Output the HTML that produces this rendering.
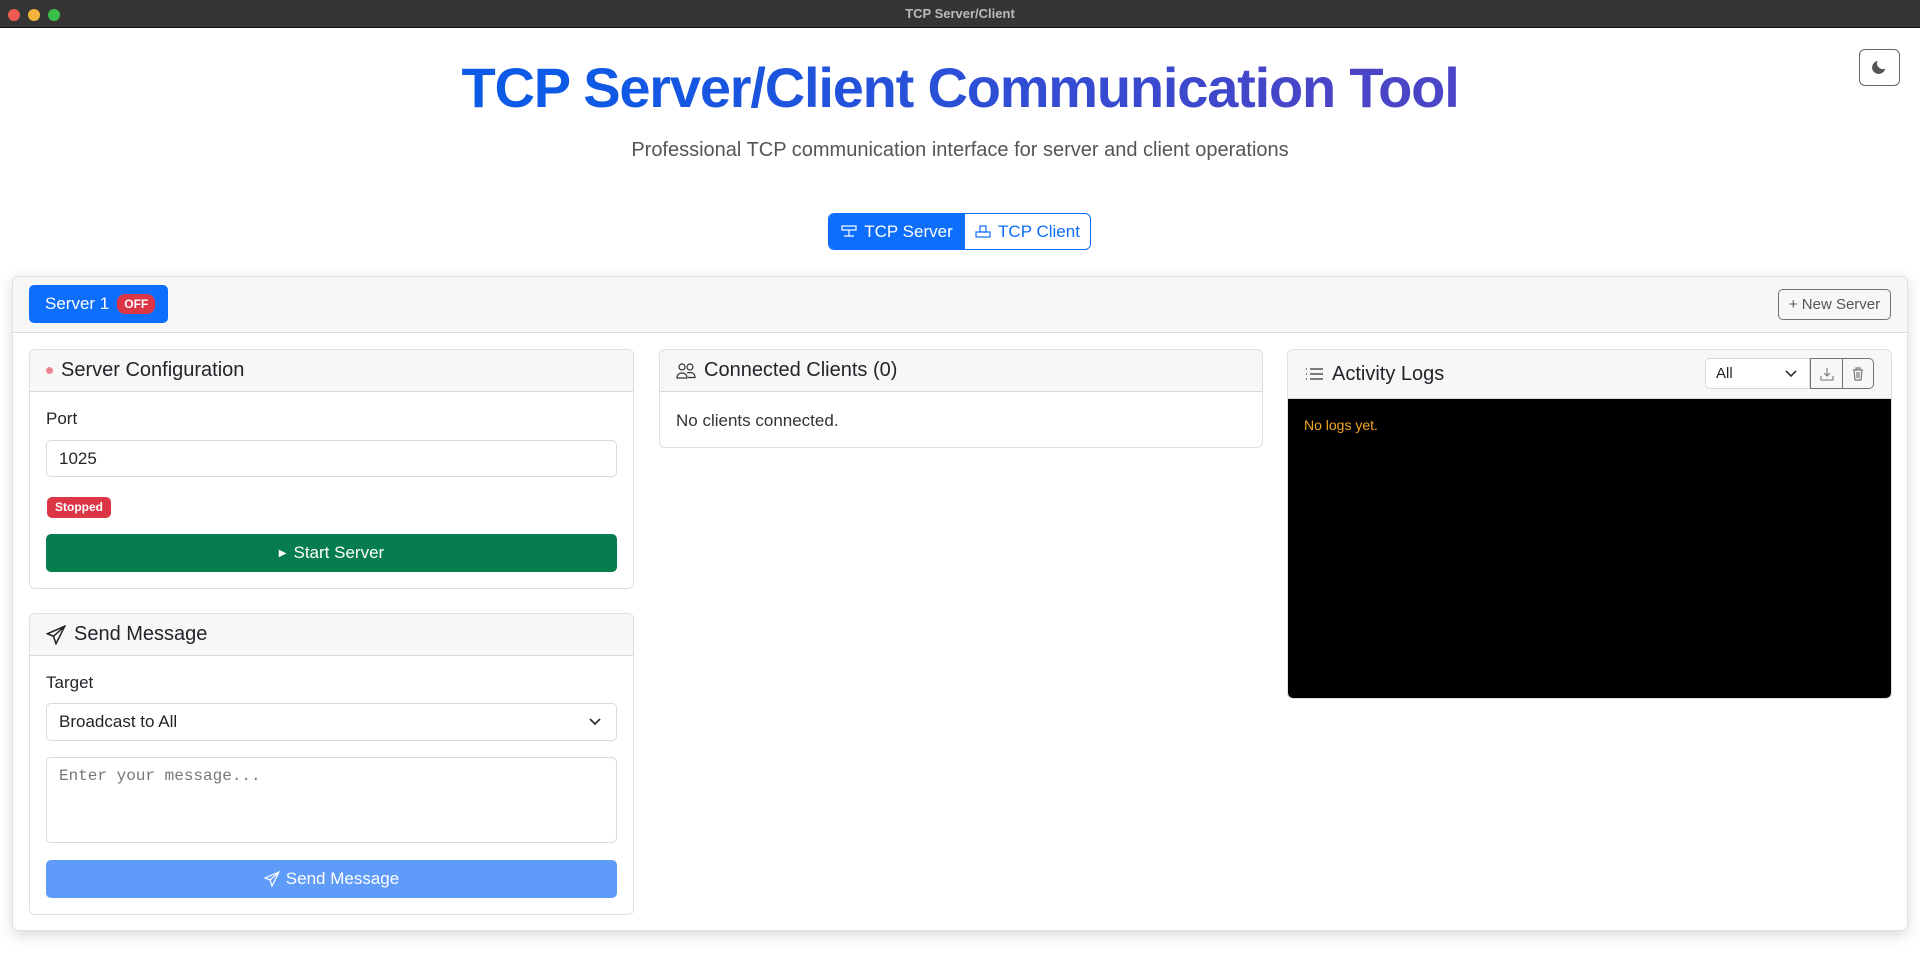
<!DOCTYPE html>
<html><head><meta charset="utf-8"><style>
*{box-sizing:border-box;margin:0;padding:0}
body{width:1920px;height:966px;overflow:hidden;background:#fff;font-family:"Liberation Sans",sans-serif;color:#212529;position:relative}
.abs{position:absolute}
.tb{left:0;top:0;width:1920px;height:28px;background:#353535;border-bottom:1px solid #111;color:#bbb;font-size:13px;font-weight:bold;text-align:center;line-height:28px}
.dot{position:absolute;top:9px;width:12px;height:12px;border-radius:50%}
h1{position:absolute;left:0;width:1920px;top:55px;text-align:center;font-size:56px;font-weight:bold;letter-spacing:-1.2px;color:#1a56db;background:linear-gradient(90deg,#0d5ae6 30%,#4a44c6 70%);-webkit-background-clip:text;background-clip:text;-webkit-text-fill-color:transparent}
.sub{left:0;width:1920px;top:139px;text-align:center;font-size:20px;color:#555}
.card{border:1px solid #dcdfe3;border-radius:6px;background:#fff}
.ch{background:#f7f7f7;border-bottom:1px solid #d6d8db;border-radius:6px 6px 0 0;font-size:20px;display:flex;align-items:center;padding-left:16px;gap:8px}
.inp{border:1px solid #d6dadf;border-radius:5px;background:#fff;font-size:17px;padding-left:12px;display:flex;align-items:center}
.lbl{font-size:17px}
</style></head><body>
<div class="abs tb">TCP Server/Client<span class="dot" style="left:8px;background:#ee5b53"></span><span class="dot" style="left:28px;background:#f4b43c"></span><span class="dot" style="left:48px;background:#3ac04a"></span></div>
<div class="abs" style="left:1859px;top:49px;width:41px;height:37px;border:1px solid #666;border-radius:6px;display:flex;align-items:center;justify-content:center"><svg width="15" height="15" viewBox="0 0 16 16"><path d="M6 1a7 7 0 1 0 8 8A6 6 0 0 1 6 1z" fill="#555"/></svg></div>
<h1>TCP Server/Client Communication Tool</h1>
<div class="abs sub">Professional TCP communication interface for server and client operations</div>
<div class="abs" style="left:828px;top:213px;width:263px;height:37px;border:1px solid #0d6efd;border-radius:6px;display:flex;overflow:hidden;font-size:17px">
<div style="width:136px;background:#0d6efd;color:#fff;display:flex;align-items:center;justify-content:center;gap:7px"><svg width="16" height="14" viewBox="0 0 16 14" fill="none" stroke="#fff" stroke-width="1.2"><rect x="1" y="1" width="14" height="4"/><path d="M8 5v6M3 11h10"/></svg>TCP Server</div>
<div style="flex:1;color:#0d6efd;display:flex;align-items:center;justify-content:center;gap:7px"><svg width="16" height="14" viewBox="0 0 16 14" fill="none" stroke="#0d6efd" stroke-width="1.2"><rect x="1" y="7" width="14" height="5"/><rect x="5" y="1" width="6" height="6"/></svg>TCP Client</div></div>
<div class="abs card" style="left:12px;top:276px;width:1896px;height:655px;box-shadow:0 4px 14px rgba(0,0,0,.15)">
<div style="height:56px;background:#f7f7f7;border-bottom:1px solid #d6d8db;border-radius:6px 6px 0 0"></div></div>
<div class="abs" style="left:29px;top:285px;width:139px;height:38px;background:#0d6efd;border-radius:5px;color:#fff;font-size:17px;display:flex;align-items:center;padding-left:16px;gap:8px">Server 1<span style="background:#dc3545;border-radius:8px;font-size:12px;font-weight:bold;padding:3px 7px">OFF</span></div>
<div class="abs" style="left:1778px;top:289px;width:113px;height:31px;border:1px solid #6c757d;border-radius:5px;color:#555;font-size:15px;display:flex;align-items:center;justify-content:center">+ New Server</div>

<div class="abs card" style="left:29px;top:349px;width:605px;height:240px">
<div class="ch" style="height:42px"><span style="width:7px;height:7px;border-radius:50%;background:#ea868f"></span>Server Configuration</div></div>
<div class="abs lbl" style="left:46px;top:409px">Port</div>
<div class="abs inp" style="left:46px;top:440px;width:571px;height:37px">1025</div>
<div class="abs" style="left:47px;top:497px;width:64px;height:21px;background:#dc3545;border-radius:5px;color:#fff;font-size:12px;font-weight:bold;text-align:center;line-height:21px">Stopped</div>
<div class="abs" style="left:46px;top:534px;width:571px;height:38px;background:#067d4e;border-radius:5px;color:#fff;font-size:17px;display:flex;align-items:center;justify-content:center;gap:7px"><span style="font-size:10px">&#9654;</span>Start Server</div>

<div class="abs card" style="left:29px;top:613px;width:605px;height:302px">
<div class="ch" style="height:42px"><svg width="20" height="20" viewBox="0 0 16 16" fill="none" stroke="#222" stroke-width="1.2"><path d="M15 1L1 7l5 2 2 6z M15 1L6 9"/></svg>Send Message</div></div>
<div class="abs lbl" style="left:46px;top:673px">Target</div>
<div class="abs inp" style="left:46px;top:703px;width:571px;height:38px">Broadcast to All<svg style="position:absolute;right:14px" width="14" height="10" viewBox="0 0 14 10" fill="none" stroke="#333" stroke-width="1.8"><path d="M2 2l5 5 5-5"/></svg></div>
<div class="abs inp" style="left:46px;top:757px;width:571px;height:86px;align-items:flex-start;padding-top:9px;font-family:'Liberation Mono',monospace;font-size:16px;color:#777">Enter your message...</div>
<div class="abs" style="left:46px;top:860px;width:571px;height:38px;background:#5f9cfa;border-radius:5px;color:#fff;font-size:17px;display:flex;align-items:center;justify-content:center;gap:6px"><svg width="16" height="16" viewBox="0 0 16 16" fill="none" stroke="#fff" stroke-width="1.2"><path d="M15 1L1 7l5 2 2 6z M15 1L6 9"/></svg>Send Message</div>

<div class="abs card" style="left:659px;top:349px;width:604px;height:99px">
<div class="ch" style="height:42px"><svg width="20" height="18" viewBox="0 0 20 18" fill="none" stroke="#333" stroke-width="1.2"><circle cx="6" cy="5" r="3"/><circle cx="14" cy="5" r="3"/><path d="M1 16c0-4 3-5 5-5s5 1 5 5zM11 11c1-.5 2-.5 3-.5 2 0 5 1 5 5h-7"/></svg>Connected Clients (0)</div>
<div style="padding:19px 16px;font-size:17px;color:#333">No clients connected.</div></div>

<div class="abs card" style="left:1287px;top:349px;width:605px;height:350px;overflow:hidden">
<div class="ch" style="height:49px"><svg width="20" height="16" viewBox="0 0 20 16" fill="none" stroke="#333" stroke-width="1.3"><path d="M6 3h13M6 8h13M6 13h13M2 3h1M2 8h1M2 13h1"/></svg>Activity Logs</div>
<div style="background:#000;height:300px;border-radius:0 0 6px 6px;padding:18px 16px;color:#f5a623;font-size:14px">No logs yet.</div></div>
<div class="abs inp" style="left:1705px;top:358px;width:105px;height:31px;font-size:15px;padding-left:10px;border-radius:5px 0 0 5px">All<svg style="position:absolute;right:12px" width="12" height="8" viewBox="0 0 12 8" fill="none" stroke="#333" stroke-width="1.6"><path d="M1 1l5 5 5-5"/></svg></div>
<div class="abs" style="left:1810px;top:358px;width:64px;height:31px;border:1px solid #6c757d;border-radius:0 5px 5px 0;display:flex"><div style="width:32px;border-right:1px solid #6c757d;display:flex;align-items:center;justify-content:center"><svg width="14" height="14" viewBox="0 0 14 14" fill="none" stroke="#777" stroke-width="1.1"><path d="M7 1v8M4 6l3 3 3-3M1 9v4h12V9"/></svg></div><div style="flex:1;display:flex;align-items:center;justify-content:center"><svg width="12" height="14" viewBox="0 0 12 14" fill="none" stroke="#777" stroke-width="1.2"><path d="M1 3h10M4 3V1h4v2M2 3l1 10h6l1-10M5 5v6M7 5v6"/></svg></div></div>
</body></html>
